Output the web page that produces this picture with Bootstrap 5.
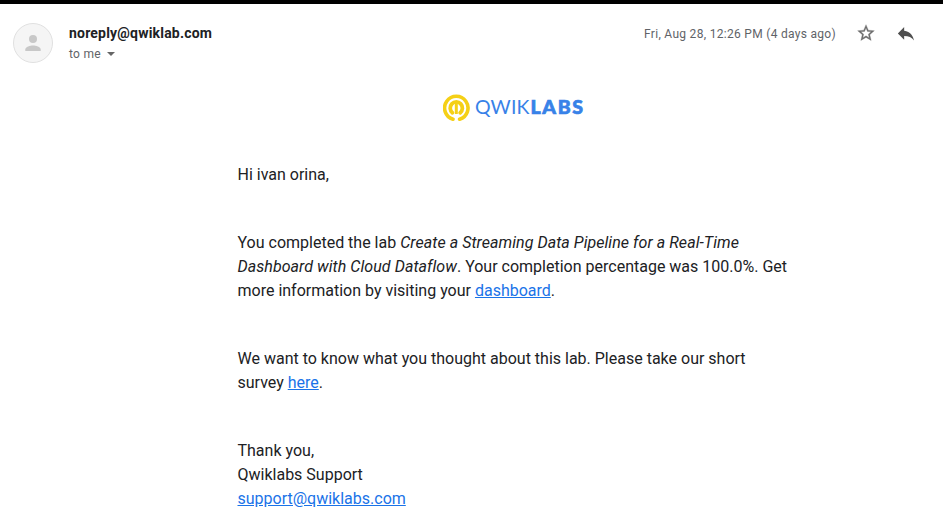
<!DOCTYPE html>
<html lang="en">
<head>
<meta charset="utf-8">
<meta name="viewport" content="width=device-width, initial-scale=1">
<title>Qwiklabs message</title>
<link href="https://cdn.jsdelivr.net/npm/bootstrap@5.3.0/dist/css/bootstrap.min.css" rel="stylesheet">
<style>
body{font-family:Roboto,"Liberation Sans",sans-serif;color:#202124;background:#fff;border-top:4px solid #000;height:531px;overflow:hidden}
.msg-head{padding:19px 25px 0 13px}
.avatar{width:40px;height:40px}
.sender{font-size:14px;line-height:20px;font-weight:700;letter-spacing:.2px}
.to-line{font-size:12px;line-height:20px;color:#5f6368;letter-spacing:.3px;padding-top:1px}
.date{font-size:12px;line-height:20px;color:#5f6368;letter-spacing:.3px;margin-right:20px;padding-top:1px}
.reply{margin-left:18px}
.brand-logo{margin-top:30px;margin-left:443px}
.brand-logo text{font-family:Lato,sans-serif;font-size:19.500px;fill:#3882e8}
.letter{width:550px;margin-left:237.500px;margin-top:41px;font-size:16px;line-height:24px}
.letter p{margin-bottom:44px}
.letter em{letter-spacing:.057px}
.letter a{color:#1a73e8}
</style>
</head>
<body>
<header class="msg-head d-flex align-items-start">
<svg class="avatar" viewBox="0 0 40 40"><circle cx="20" cy="20" r="19.500" fill="#f5f5f5" stroke="#e0e0e0"/><circle cx="20" cy="16" r="4" fill="#c8c8c8"/><path d="M12.300 28v-1.500c0-2.700 5-4 7.700-4s7.700 1.300 7.700 4V28z" fill="#c8c8c8"/></svg>
<div class="flex-grow-1 ms-3">
<div class="sender">noreply@qwiklab.com</div>
<div class="to-line d-flex align-items-center">to me<svg class="ms-1" width="12" height="4" viewBox="0 0 12 4"><path d="M2 0h8L6 4z" fill="#666"/></svg></div>
</div>
<div class="date">Fri, Aug 28, 12:26 PM (4 days ago)</div>
<svg width="20" height="20" viewBox="0 0 24 24" fill="#6e6e6e" stroke="#6e6e6e" stroke-width=".35"><path d="M22 9.240l-7.190-.620L12 2 9.190 8.630 2 9.240l5.460 4.730L5.820 21 12 17.270 18.180 21l-1.630-7.030L22 9.240zM12 15.400l-3.760 2.270 1-4.280-3.320-2.880 4.380-.380L12 6.100l1.710 4.040 4.380.380-3.320 2.880 1 4.280L12 15.400z"/></svg>
<svg class="reply" width="24" height="20" viewBox="-2 0 28 24" fill="#4f4f4f"><path d="M10 9V5l-7 7 7 7v-4.100c5 0 8.500 1.600 11 5.100-1-5-4-10-11-11z" transform="translate(-1 -.5) scale(1.080)"/></svg>
</header>
<svg class="brand-logo d-block" width="146" height="28" viewBox="0 0 146 28">
<g fill="none" stroke="#f5d016">
<path d="M10 25.200a11.700 11.700 0 1 1 6.600 0" stroke-width="3.600" stroke-linecap="round"/>
<path d="M9.400 18.700a6.100 6.100 0 1 1 7.800 0" stroke-width="3.800" stroke-linecap="round"/>
<path d="M13.300 8.500v11.500" stroke-width="3"/>
</g>
<text x="32" y="20" textLength="54.500" lengthAdjust="spacing">QWIK</text>
<text x="87.500" y="20" textLength="52.500" lengthAdjust="spacing" font-weight="900" stroke="#3882e8" stroke-width=".7">LABS</text>
</svg>
<main class="letter">
<p>Hi ivan orina,</p>
<p>You completed the lab <em>Create a Streaming Data Pipeline for a Real-Time Dashboard with Cloud Dataflow</em>. Your completion percentage was 100.0%. Get more information by visiting your <a href="#">dashboard</a>.</p>
<p>We want to know what you thought about this lab. Please take our short survey <a href="#">here</a>.</p>
<p>Thank you,<br>Qwiklabs Support<br><a href="#">support@qwiklabs.com</a></p>
</main>
<script src="https://cdn.jsdelivr.net/npm/bootstrap@5.3.0/dist/js/bootstrap.bundle.min.js"></script>
</body>
</html>
